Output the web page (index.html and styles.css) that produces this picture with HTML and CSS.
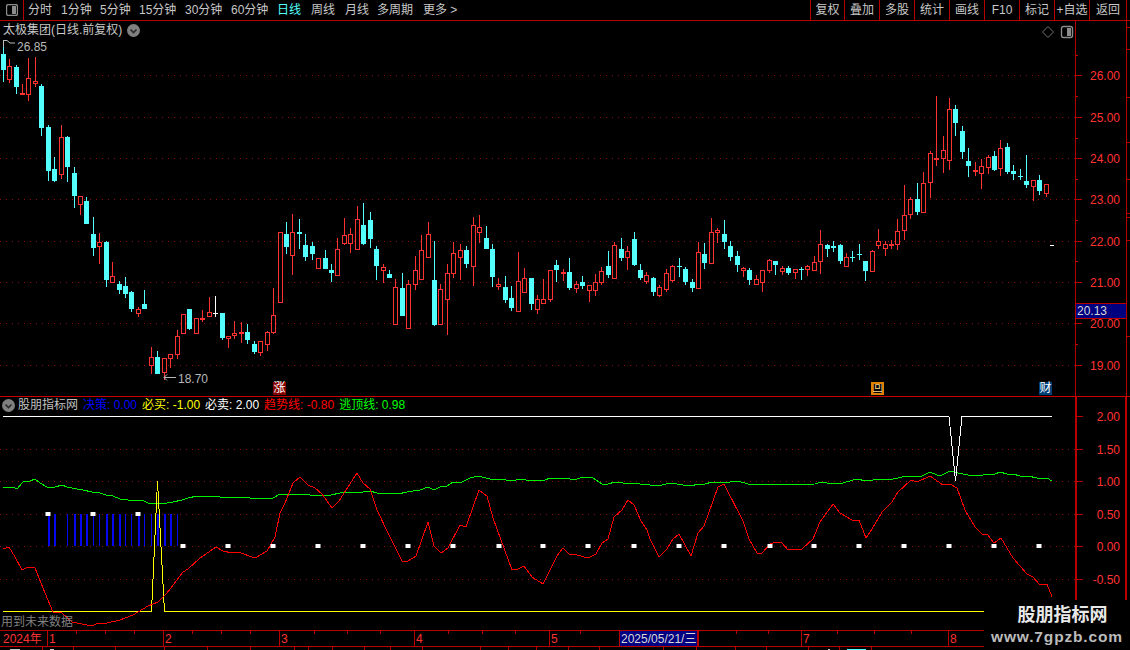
FILE: index.html
```html
<!DOCTYPE html>
<html lang="zh-CN">
<head>
<meta charset="utf-8">
<title>太极集团</title>
<link rel="stylesheet" href="styles.css">
</head>
<body>
<div class="app">
  <header class="toolbar">
    <div class="panel-btn"><svg width="12" height="12" viewBox="0 0 12 12"><rect x="0.5" y="0.5" width="11" height="11" rx="2" class="ico-box"/><rect x="6" y="2" width="4" height="8" class="ico-fill"/></svg></div>
    <nav class="periods">
      <span class="period w28">分时</span><span class="period w39">1分钟</span><span class="period w39">5分钟</span><span class="period w46">15分钟</span><span class="period w46">30分钟</span><span class="period w46">60分钟</span><span class="period w34 on">日线</span><span class="period w34">周线</span><span class="period w33">月线</span><span class="period w45">多周期</span><span class="period">更多 &gt;</span>
    </nav>
    <div class="tools">
      <span class="tool">复权</span><span class="tool">叠加</span><span class="tool">多股</span><span class="tool">统计</span><span class="tool">画线</span><span class="tool">F10</span><span class="tool">标记</span><span class="tool">+自选</span><span class="tool">返回</span><span class="tool tool-end"></span>
    </div>
  </header>

  <section class="pane upper">
    <div class="plot">
      <svg id="kchart" class="canvas" width="1075" height="375" viewBox="0 21 1075 375">
        <g class="grid">
          <line x1="0" x2="1075" y1="75.5" y2="75.5"/><line x1="0" x2="1075" y1="117.5" y2="117.5"/><line x1="0" x2="1075" y1="158.5" y2="158.5"/><line x1="0" x2="1075" y1="199.5" y2="199.5"/><line x1="0" x2="1075" y1="241.5" y2="241.5"/><line x1="0" x2="1075" y1="282.5" y2="282.5"/><line x1="0" x2="1075" y1="323.5" y2="323.5"/><line x1="0" x2="1075" y1="365.5" y2="365.5"/>
        </g>
        <g id="candles"></g>
        <path class="note-line" d="M3.5 47V40M3.5 40.5H7L10 43H15"/>
        <text class="note" x="17" y="51">26.85</text>
        <path class="note-line" d="M164 377.5H176M167 374.5L164 377.5L167 380.5"/>
        <text class="note" x="178" y="383">18.70</text>
        <rect class="dash" x="1050" y="245" width="4" height="1"/>
      </svg>
      <div class="title">
        <span>太极集团(日线.前复权)</span>
        <svg class="chev" width="13" height="13" viewBox="0 0 13 13"><circle cx="6.5" cy="6.5" r="6.5" class="chev-bg"/><path d="M3.5 5.5L6.5 8.5L9.5 5.5" class="chev-line"/></svg>
      </div>
      <svg class="corner" width="32" height="14" viewBox="0 0 32 14"><path class="ico-line" d="M6 1.5L11.5 7L6 12.5L0.5 7Z"/><rect x="19.5" y="1.5" width="11" height="11" rx="2" class="ico-box"/><rect x="25" y="3" width="4" height="8" class="ico-fill"/></svg>
      <span class="flag flag-rise">涨</span>
      <span class="flag flag-back">回</span>
      <span class="flag flag-fin">财</span>
    </div>
    <svg class="axis" width="55" height="375" viewBox="1075 21 55 375">
      <path class="axis-line" d="M1075.5 21V396M1126.5 21V396"/>
      <path class="axis-line" d="M1075 75.5H1082M1075 117.5H1082M1075 158.5H1082M1075 199.5H1082M1075 241.5H1082M1075 282.5H1082M1075 323.5H1082M1075 365.5H1082M1075 55.5H1078M1075 96.5H1078M1075 138.5H1078M1075 179.5H1078M1075 220.5H1078M1075 261.5H1078M1075 303.5H1078M1075 344.5H1078"/>
      <path class="axis-line" d="M1126 27.5H1130M1126 49.5H1130M1126 97.5H1130M1126 142.5H1130M1126 179.5H1130M1126 213.5H1130M1126 217.5H1130M1126 240.5H1130M1126 336.5H1130"/>
      <g class="scale">
        <text x="1120" y="80">26.00</text><text x="1120" y="122">25.00</text><text x="1120" y="163">24.00</text><text x="1120" y="204">23.00</text><text x="1120" y="246">22.00</text><text x="1120" y="287">21.00</text><text x="1120" y="328">20.00</text><text x="1120" y="370">19.00</text>
      </g>
      <rect class="last-box" x="1075.5" y="303.5" width="51" height="15"/>
      <text class="last-text" x="1077" y="315">20.13</text>
    </svg>
  </section>

  <section class="pane lower">
    <div class="plot">
      <svg id="subchart" class="canvas" width="1075" height="233" viewBox="0 397 1075 233">
        <g class="grid">
          <line x1="0" x2="1075" y1="449.5" y2="449.5"/><line x1="0" x2="1075" y1="481.5" y2="481.5"/><line x1="0" x2="1075" y1="514.5" y2="514.5"/><line x1="0" x2="1075" y1="546.5" y2="546.5"/><line x1="0" x2="1075" y1="579.5" y2="579.5"/>
        </g>
        <g id="bars"></g>
        <polyline class="ln ln-green" points="3,487 13,487 17,489 23,482 30,481 35,479 40,483 47,487 55,487 62,485 67,487 77,489 83,490 92,492 100,493 106,495 113,496 120,499 128,500 142,500 148,503 157,504 167,503 173,502 182,500 188,498 197,496 213,496 220,497 233,497 250,498 257,499 273,498 280,494 287,494 300,494 310,495 327,495 331,495 340,493 353,492 363,492 370,491 377,493 393,493 398,494 407,492 420,490 428,487 434,490 440,487 447,486 453,482 462,482 470,478 478,476 490,479 502,479 510,481 522,479 530,481 545,480 550,478 567,478 570,479 577,479 583,477 593,478 602,484 608,484 615,482 623,483 630,483 640,484 650,485 662,485 670,483 683,485 691,486 698,484 705,484 712,482 723,482 730,482 738,481 748,484 767,484 778,485 815,484 822,482 827,483 843,483 853,480 858,479 865,481 873,480 893,479 907,476 920,477 930,472 937,475 942,475 950,471 958,473 973,476 983,475 995,474 1000,472 1007,474 1013,474 1020,476 1028,476 1037,478 1047,478 1052,481"/>
        <polyline class="ln ln-white" points="3,416.5 949,416.5 955.5,481 962,416.5 1052,416.5"/>
        <polyline class="ln ln-yellow" points="3,611.5 151.5,611.5 157.5,481 164.5,611.5 984,611.5"/>
        <polyline class="ln ln-red" points="3,549 9,547 15,557 22,570 28,567 35,568 43,588 53,612 62,613 72,622 92,626 98,623 107,623 120,620 133,615 148,606 158,602 167,593 183,572 188,569 200,558 216,547 223,551 232,553 238,552 255,558 267,551 275,537 280,513 285,503 293,483 300,477 308,485 315,488 322,494 332,508 339,501 357,473 363,483 370,489 377,510 388,533 402,561 408,561 416,556 428,522 434,546 441,553 448,548 460,525 466,527 479,490 487,496 493,518 512,570 518,569 524,566 532,577 543,584 557,556 563,548 569,554 577,555 588,558 596,554 602,543 608,539 614,517 622,510 628,500 634,505 641,521 647,530 650,539 659,557 667,549 673,539 679,534 691,556 698,533 704,526 718,487 724,484 743,521 749,539 757,553 762,553 770,544 776,542 782,543 788,550 802,549 813,539 820,522 833,504 840,513 852,520 859,520 866,538 872,529 882,512 892,502 898,492 911,480 917,482 930,476 943,485 950,484 957,488 965,510 975,527 982,534 988,535 994,543 1001,538 1013,558 1027,574 1033,577 1039,584 1047,584 1052,597"/>
        <g id="marks"></g>
      </svg>
      <div class="legend">
        <svg class="chev" width="13" height="13" viewBox="0 0 13 13"><circle cx="6.5" cy="6.5" r="6.5" class="chev-bg"/><path d="M3.5 5.5L6.5 8.5L9.5 5.5" class="chev-line"/></svg>
        <span class="lg-name">股朋指标网</span>
        <span class="lg-blue">决策: 0.00</span>
        <span class="lg-yellow">必买: -1.00</span>
        <span class="lg-white">必卖: 2.00</span>
        <span class="lg-red">趋势线: -0.80</span>
        <span class="lg-green">逃顶线: 0.98</span>
      </div>
      <span class="warning">用到未来数据</span>
    </div>
    <svg class="axis" width="55" height="233" viewBox="1075 397 55 233">
      <path class="axis-line thick" d="M1076 397V630M1126 397V630"/>
      <path class="axis-line" d="M1077 416.5H1083M1077 449.5H1083M1077 481.5H1083M1077 514.5H1083M1077 546.5H1083M1077 579.5H1083"/>
      <g class="scale">
        <text x="1120" y="421">2.00</text><text x="1120" y="454">1.50</text><text x="1120" y="486">1.00</text><text x="1120" y="519">0.50</text><text x="1120" y="551">0.00</text><text x="1120" y="584">-0.50</text>
      </g>
    </svg>
  </section>

  <footer class="timeline">
    <div class="dates">
      <span class="cell w47">2024年</span><span class="cell m w116">1</span><span class="cell m w116">2</span><span class="cell m w135">3</span><span class="cell m w135">4</span><span class="cell m w70">5</span><span class="cell cursor">2025/05/21/三</span><span class="cell m w103"></span><span class="cell m w148">7</span><span class="cell m grow">8</span>
      <svg class="ticks" width="984" height="3" viewBox="0 0 984 3"><path class="axis-line" d="M76.5 0V3M105.5 0V3M134.5 0V3M192.5 0V3M221.5 0V3M250.5 0V3M314.5 0V3M347.5 0V3M380.5 0V3M448.5 0V3M482.5 0V3M515.5 0V3M580.5 0V3M736.5 0V3M768.5 0V3M837.5 0V3M874.5 0V3M911.5 0V3"/></svg>
    </div>
    <svg class="lowrow" width="984" height="3" viewBox="0 0 984 3"><path class="axis-line" d="M42.5 0V3M73.5 0V3M115.5 0V3M164.5 0V3M207.5 0V3M250.5 0V3M294.5 0V3M308.5 0V3M332.5 0V3M364.5 0V3M390.5 0V3M422.5 0V3M480.5 0V3M508.5 0V3M536.5 0V3M568.5 0V3M599.5 0V3M663.5 0V3M696.5 0V3M735.5 0V3M766.5 0V3M808.5 0V3M839.5 0V3M871.5 0V3"/><path class="bit-white" d="M10 2.5H20M50 2.5H54M828 2.5H830"/><path class="bit-cyan" d="M847 2.5H866"/></svg>
  </footer>

  <aside class="watermark">
    <div class="wm-title">股朋指标网</div>
    <div class="wm-url">www.7gpzb.com</div>
  </aside>
</div>
<script src="chart.js"></script>
</body>
</html>
```

FILE: styles.css
```css
* { box-sizing: border-box; }
html, body { margin: 0; padding: 0; background: #000; }
body { font-family: "Liberation Sans", "Noto Sans CJK SC", sans-serif; font-size: 12px; }
svg { display: block; }
svg text { font-family: "Liberation Sans", "Noto Sans CJK SC", sans-serif; font-size: 12px; }

.app { position: relative; width: 1130px; height: 650px; background: #000; overflow: hidden; display: flex; flex-direction: column; color: #c8c8c8; }

.toolbar { height: 21px; flex: none; display: flex; align-items: stretch; border-bottom: 1px solid #b80000; }
.panel-btn { width: 24px; flex: none; display: flex; align-items: center; justify-content: center; border-right: 1px solid #b80000; }
.periods { display: flex; align-items: center; padding-left: 4px; flex: 1; }
.period { color: #c8c8c8; line-height: 20px; white-space: nowrap; }
.period.on { color: #54ffff; }
.w28 { width: 33px; } .w39 { width: 39px; } .w46 { width: 46px; } .w34 { width: 34px; } .w33 { width: 32px; } .w45 { width: 46px; }
.tools { display: flex; }
.tool { width: 35px; height: 20px; line-height: 20px; text-align: center; border-left: 1px solid #b80000; color: #c8c8c8; white-space: nowrap; }
.tool:nth-child(1) { width: 34px; }
.tool:nth-child(9) { width: 37px; }
.tool-end { width: 4px; }
.ico-box { fill: none; stroke: #8c8c8c; stroke-width: 1.4; }
.ico-fill { fill: #8c8c8c; }
.ico-line { fill: none; stroke: #707070; stroke-width: 1; }

.pane { display: flex; flex: none; }
.upper { height: 376px; border-bottom: 1px solid #c80000; }
.lower { height: 233px; }
.plot { position: relative; width: 1075px; flex: none; }
.axis { flex: none; }

.grid line { stroke: #8c0f0f; stroke-width: 1; stroke-dasharray: 1 5; }
.axis-line { fill: none; stroke: #b80000; stroke-width: 1; }
.axis-line.thick { stroke-width: 2; }
.scale text { fill: #ff3232; text-anchor: end; }
.last-box { fill: #000080; stroke: #b80000; stroke-width: 1; }
.last-text { fill: #d8d8d8; }
.note { fill: #b8b8b8; }
.note-line { fill: none; stroke: #b8b8b8; stroke-width: 1; }
.dash { fill: #fff; }

.wick-r { fill: #ff3232; }
.body-r { fill: #000; stroke: #ff3232; stroke-width: 1; }
.fill-c { fill: #54ffff; }
.fill-w { fill: #fff; }

.title { position: absolute; left: 3px; top: 1px; height: 16px; display: flex; align-items: center; gap: 5px; color: #c8c8c8; line-height: 16px; }
.chev-bg { fill: #808080; }
.chev-line { fill: none; stroke: #2a2a2a; stroke-width: 1.6; }
.corner { position: absolute; left: 1042px; top: 4px; }
.flag { position: absolute; top: 361px; width: 13px; height: 13px; line-height: 13px; text-align: center; color: #fff; font-size: 12px; }
.flag-rise { left: 273px; background: #840000; }
.flag-back { left: 871px; background: #000; color: #ffd890; outline: 2px solid #e08000; outline-offset: -2px; }
.flag-fin { left: 1039px; background: #004078; }

.ln { fill: none; stroke-width: 1; shape-rendering: crispEdges; }
.ln-green { stroke: #00f000; }
.ln-white { stroke: #fff; }
.ln-yellow { stroke: #ffff00; }
.ln-red { stroke: #ff0000; }
.bar-blue { fill: #0808f0; }
.mark { fill: #fff; }

.legend { position: absolute; left: 2px; top: 1px; height: 15px; display: flex; align-items: center; line-height: 15px; white-space: pre; }
.legend .chev { margin-right: 3px; }
.legend span { margin-right: 5px; }
.lg-name { color: #c0c0c0; }
.lg-blue { color: #0000ff; }
.lg-yellow { color: #ffff00; }
.lg-white { color: #ffffff; }
.lg-red { color: #ff0000; }
.lg-green { color: #00ff00; }
.warning { position: absolute; left: 1px; top: 217px; color: #808080; line-height: 16px; }

.timeline { flex: none; height: 20px; }
.dates { position: relative; height: 17px; display: flex; border-top: 1px solid #b80000; border-bottom: 1px solid #b80000; }
.cell { display: block; height: 15px; line-height: 16px; color: #ff3232; white-space: nowrap; padding-left: 3px; }
.cell.m { border-left: 1px solid #b80000; padding-left: 1px; }
.w47 { width: 47px; } .w116 { width: 116px; } .w135 { width: 135px; } .w70 { width: 70px; } .w103 { width: 103px; } .w148 { width: 147px; } .grow { flex: 1; }
.cursor { width: 79px; background: #000080; color: #d8d8d8; border-left: 1px solid #b80000; border-right: 1px solid #b80000; padding-left: 1px; font-size: 12px; overflow: hidden; }
.ticks { position: absolute; left: 0; top: 0; }
.bit-white { stroke: #c8c8c8; fill: none; stroke-width: 1; }
.bit-cyan { stroke: #54ffff; fill: none; stroke-width: 1; }

.watermark { position: absolute; left: 984px; top: 600px; width: 146px; height: 50px; background: #000; text-align: center; }
.wm-title { margin-top: 3px; padding-left: 11px; height: 24px; line-height: 24px; font-size: 18px; font-weight: 700; color: #e8e8e8; }
.wm-url { height: 20px; line-height: 20px; font-size: 15.5px; font-weight: 700; color: #bcbcbc; letter-spacing: 0.85px; white-space: nowrap; }
```

FILE: chart.js
```js
var NS = 'http://www.w3.org/2000/svg';
var DATA = 'c46,54,70,82 r59,66,80,83 c65,67,87,94 r84,93,95,95 r58,78,95,101 r57,81,84,87 c84,86,128,136 c125,127,171,181 c157,169,181,182 r125,137,175,179 c136,137,167,182 c167,173,196,208 r196,196,205,215 c197,201,224,224 c217,234,248,256 r233,242,247,264 c241,242,280,287 r262,276,283,283 c281,284,290,294 c277,286,294,298 c291,292,309,312 r307,309,314,317 c290,304,309,309 r347,357,366,374 c351,357,374,374 r358,358,373,380 r354,354,359,368 r330,336,355,359 r314,314,334,334 c309,309,329,330 r318,318,334,334 r310,318,320,322 r297,312,317,317 w296,313,314,317 c313,313,338,340 r336,336,339,348 r321,333,336,339 r322,332,334,343 c324,332,340,344 c341,344,352,354 r341,341,353,356 r331,332,345,351 r288,315,333,334 r232,232,303,303 c222,234,247,254 r214,232,256,275 c219,232,234,249 c234,245,257,261 c242,246,254,260 r258,258,269,269 c250,258,269,269 c264,270,273,282 r238,249,276,276 r218,235,244,245 r228,234,244,253 r206,219,250,250 c203,225,244,245 c212,220,239,248 c246,249,266,280 r264,267,271,283 c270,274,278,278 r279,287,325,325 c273,288,316,316 r280,284,329,329 r256,270,285,290 r235,250,280,280 r222,234,258,258 c241,280,325,326 r284,289,325,325 r264,273,300,335 r242,253,274,278 r244,250,258,280 c246,250,264,268 r217,225,267,286 r215,227,233,243 c226,238,249,249 c244,249,277,287 r278,284,287,290 c276,287,300,303 c286,298,308,311 r252,281,312,312 r268,278,293,293 c278,278,304,310 r295,299,310,314 r279,299,304,304 r270,270,300,302 c260,265,270,282 r269,272,274,281 c258,272,288,290 r281,284,289,293 c276,282,286,289 r285,285,291,302 r274,282,291,296 r267,271,283,285 c251,266,275,278 r242,245,279,279 c238,249,258,261 r246,251,258,270 c232,239,265,266 c264,270,278,280 r272,275,282,284 c277,278,292,296 r285,287,296,297 r269,273,290,292 r265,266,281,282 c258,266,267,277 c267,269,282,285 c279,282,288,292 r242,252,289,289 c243,254,263,269 r218,232,264,264 r228,230,233,243 c220,234,242,249 c241,246,257,261 c251,256,265,272 r267,268,271,277 c268,270,280,285 r275,279,285,285 r270,270,283,292 r259,260,271,273 c261,261,265,275 r266,268,272,275 c266,268,273,275 r269,269,273,279 c267,269,270,280 r265,266,270,276 r256,262,271,271 r230,244,262,274 c244,245,249,257 c241,246,248,252 c244,245,261,264 r253,257,267,267 c251,257,258,262 c244,254,255,260 c261,261,271,281 r250,251,272,272 r229,241,246,249 r241,244,249,256 r240,244,246,249 r219,231,245,250 r185,215,231,240 r197,199,215,219 c183,199,212,215 r172,183,213,213 r151,153,183,198 r96,158,159,166 r136,150,159,173 r98,109,161,170 c105,109,123,136 c126,131,152,159 c148,161,166,177 r162,170,172,176 r159,166,174,189 r155,157,168,174 c151,156,170,171 r140,148,169,176 c143,147,172,174 c165,171,174,180 c169,176,177,180 c155,181,185,188 r180,180,187,201 c175,180,191,195 r184,184,194,197';

function el(name, attrs, parent) {
  var n = document.createElementNS(NS, name);
  for (var k in attrs) n.setAttribute(k, attrs[k]);
  parent.appendChild(n);
  return n;
}
function rect(parent, x, y, w, h, cls) {
  if (h <= 0) return;
  el('rect', { x: x, y: y, width: w, height: h, 'class': cls }, parent);
}

var candles = document.getElementById('candles');
DATA.split(' ').forEach(function (row, i) {
  var kind = row.charAt(0);
  var v = row.slice(1).split(',').map(Number);
  var px = Math.floor(3.25 + 6.437 * i);
  if (kind === 'r') {
    rect(candles, px, v[0], 1, v[1] - v[0], 'wick-r');
    rect(candles, px, v[2], 1, v[3] - v[2], 'wick-r');
    if (v[2] - v[1] < 3) {
      rect(candles, px - 2, v[1], 5, Math.max(2, v[2] - v[1]), 'wick-r');
    } else {
      rect(candles, px - 1.5, v[1] + 0.5, 4, v[2] - v[1] - 1, 'body-r');
    }
  } else {
    var cls = kind === 'w' ? 'fill-w' : 'fill-c';
    rect(candles, px, v[0], 1, v[3] - v[0], cls);
    rect(candles, px - 2, v[1], 5, Math.max(1, v[2] - v[1]), cls);
  }
});

var bars = document.getElementById('bars');
[[48,2],[54,2],[67,1],[74,2],[80,2],[86,2],[93,1],[99,1],[106,2],[112,2],[119,2],[125,1],[131,1],[138,2],[144,1],[151,1],[157,2],[164,2],[170,2],[177,1]].forEach(function (b) {
  rect(bars, b[0], 514, b[1], 32, 'bar-blue');
});

var marks = document.getElementById('marks');
[48,93,138,183,228,273,318,363,408,453,499,543,588,634,679,724,770,814,859,904,949,994,1039].forEach(function (x, i) {
  rect(marks, x - 2.5, i < 3 ? 512 : 544, 5, 4, 'mark');
});
```
